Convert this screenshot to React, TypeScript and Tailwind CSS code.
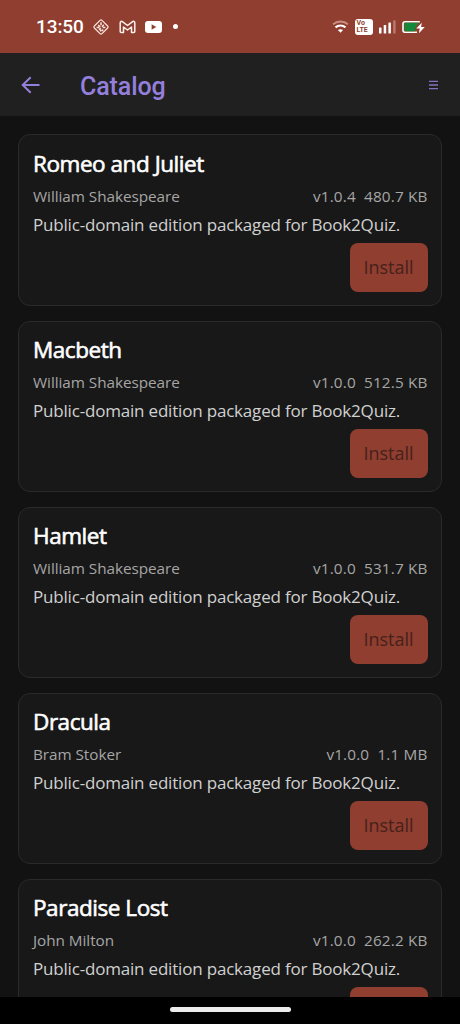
import type { ReactNode } from 'react';

type Book = {
  title: string;
  author: string;
  version: string;
  size: string;
};

const books: Book[] = [
  { title: 'Romeo and Juliet', author: 'William Shakespeare', version: 'v1.0.4', size: '480.7 KB' },
  { title: 'Macbeth', author: 'William Shakespeare', version: 'v1.0.0', size: '512.5 KB' },
  { title: 'Hamlet', author: 'William Shakespeare', version: 'v1.0.0', size: '531.7 KB' },
  { title: 'Dracula', author: 'Bram Stoker', version: 'v1.0.0', size: '1.1 MB' },
  { title: 'Paradise Lost', author: 'John Milton', version: 'v1.0.0', size: '262.2 KB' },
];

function DiamondIcon() {
  return (
    <svg width="18" height="18" viewBox="0 0 18 18" fill="none" stroke="#fbe3dc">
      <rect x="3.6" y="3.6" width="10.8" height="10.8" rx="1.4" strokeWidth="1.2" transform="rotate(45 9 9)" />
      <path d="M9 4.2v3M6.2 7.2l2 1.6M11.8 6.8 10 8.8M4.6 9.4h2.6M10.8 9.6h2.6M7 11.6l1.8-1.6M11.2 11.6 9.8 13M8.6 11.6v2" strokeWidth="1.5" />
    </svg>
  );
}

function MailIcon() {
  return (
    <svg width="17" height="14" viewBox="0 0 17 14" fill="none" stroke="#fff1ec" strokeWidth="1.5" strokeLinejoin="round">
      <path d="M1.2 3C1.2 1.3 2.6 1 3.7 1.8L8.5 5.5l4.8-3.7c1.1-.8 2.5-.5 2.5 1.2v8.5c0 .8-.3 1-1 1h-2.3V7L8.5 10 4.5 7v5.5H2.2c-.7 0-1-.3-1-1Z" />
    </svg>
  );
}

function VideoIcon() {
  return (
    <svg width="17" height="12" viewBox="0 0 17 12">
      <rect width="17" height="12" rx="3" fill="#fff" />
      <path d="M6.6 3.3v5.4L11.3 6Z" fill="#8f3e30" />
    </svg>
  );
}

function WifiIcon() {
  return (
    <svg width="17" height="13" viewBox="0 0 17 13" fill="none" strokeWidth="1.9">
      <path d="M1 4.4a11.2 11.2 0 0 1 15 0" stroke="#c98f84" />
      <path d="M3.5 7.4a7.5 7.5 0 0 1 10 0" stroke="#fff" strokeWidth="2.1" />
      <path d="M5.9 10.1a4.4 4.4 0 0 1 5.2 0L8.5 12.7Z" fill="#fff" />
    </svg>
  );
}

function SignalIcon() {
  return (
    <svg width="17" height="14" viewBox="0 0 17 14" fill="#fff">
      <rect x="0" y="7.5" width="2.5" height="6" rx=".6" />
      <rect x="4.7" y="5" width="2.5" height="8.5" rx=".6" />
      <rect x="9.4" y="2.5" width="2.5" height="11" rx=".6" />
      <rect x="14.2" y="0.3" width="2.4" height="13.2" rx=".6" fill="#bc7a6e" />
    </svg>
  );
}

function BatteryIcon() {
  return (
    <svg width="23" height="14" viewBox="0 0 23 14">
      <path d="M17.8 1.7H3.2C1.8 1.7 1 2.4 1 3.7v6.6c0 1.3.8 2 2.2 2H15" fill="none" stroke="#fff" strokeWidth="1.6" />
      <path d="M3.6 2.7h13L13.3 7.4v3.9H3.6c-.7 0-1-.3-1-1V3.7c0-.7.3-1 1-1Z" fill="#128a3a" />
      <path d="m19.8 2.8-5.6 5.7h3.5l-.8 4.7 5.9-6.2h-3.7Z" fill="#fff" />
    </svg>
  );
}

function StatusBar() {
  return (
    <div className="flex h-[53px] shrink-0 items-center bg-[#8f3e30] pl-9 pr-[35px] text-white">
      <span className="w-14 font-[Roboto,sans-serif] text-[19px] font-medium leading-5 tracking-[-0.1px]">13:50</span>
      <DiamondIcon />
      <span className="ml-[9px]"><MailIcon /></span>
      <span className="ml-[9px]"><VideoIcon /></span>
      <span className="ml-[11px] size-[5px] rounded-full bg-white" />
      <div className="ml-auto flex items-center">
        <WifiIcon />
        <div className="ml-[6px] flex h-4 w-[18px] flex-col justify-center rounded-[3px] bg-white pl-[1.5px] font-[Roboto,sans-serif] text-[7px] font-bold leading-[6.5px] text-[#8f3e30]">
          <span>Vo</span>
          <span>LTE</span>
        </div>
        <span className="ml-[6px]"><SignalIcon /></span>
        <span className="ml-[6px]"><BatteryIcon /></span>
      </div>
    </div>
  );
}

function Header() {
  return (
    <header className="flex h-[63px] shrink-0 items-center bg-[#202020] pl-[21px] pr-[22px] text-[#957fdc]">
      <svg width="19" height="18" viewBox="0 0 19 18" fill="none" stroke="currentColor" strokeWidth="2" className="shrink-0">
        <path d="M18.5 9H2M9.7 1.2 1.7 9l8 7.8" />
      </svg>
      <h1 className="ml-10 pt-1 font-[Roboto,sans-serif] text-[25px] font-medium leading-8 tracking-[-0.1px]">Catalog</h1>
      <svg width="9" height="10" viewBox="0 0 9 10" fill="none" stroke="#8272c0" strokeWidth="1.3" className="ml-auto">
        <path d="M0 1.3h9M0 5h9M0 8.7h9" />
      </svg>
    </header>
  );
}

function Meta({ children }: { children: ReactNode }) {
  return <span className="whitespace-pre tracking-[0.15px]">{children}</span>;
}

function BookCard({ book }: { book: Book }) {
  return (
    <article className="flex h-[171.2px] shrink-0 flex-col rounded-xl border border-[#2a2a2a] bg-[#181818] pl-3.5 pr-[13.5px] pt-[13.2px]">
      <h2 className="h-[30px] text-[22.5px] leading-[30px] tracking-[-0.45px] text-white [-webkit-text-stroke:0.6px_white]">
        {book.title}
      </h2>
      <div className="mt-[6px] flex h-[22px] justify-between text-[15.3px] leading-[22px] text-[#a6a6a6]">
        <span className="tracking-[-0.05px]">{book.author}</span>
        <Meta>{`${book.version}  ${book.size}`}</Meta>
      </div>
      <p className="mt-[6px] h-6 whitespace-nowrap text-[17px] leading-6 tracking-[-0.19px] text-[#d0d0d0]">
        Public-domain edition packaged for Book2Quiz.
      </p>
      <button className="mt-[6px] h-[49px] w-[78px] self-end rounded-lg bg-[#8f3e30] text-[18px] text-[#46211b]">
        Install
      </button>
    </article>
  );
}

export default function App() {
  return (
    <div className="flex h-[1024px] w-[460px] flex-col overflow-hidden bg-[#121212] font-['Open_Sans',sans-serif]">
      <StatusBar />
      <Header />
      <main className="flex min-h-0 flex-1 flex-col gap-[15px] overflow-hidden px-[18px] pt-[18.4px]">
        {books.map((book) => (
          <BookCard key={book.title} book={book} />
        ))}
      </main>
      <div className="flex h-[27px] shrink-0 justify-center bg-black pt-[10px]">
        <div className="h-[5px] w-[121px] rounded-full bg-[#ececec]" />
      </div>
    </div>
  );
}
